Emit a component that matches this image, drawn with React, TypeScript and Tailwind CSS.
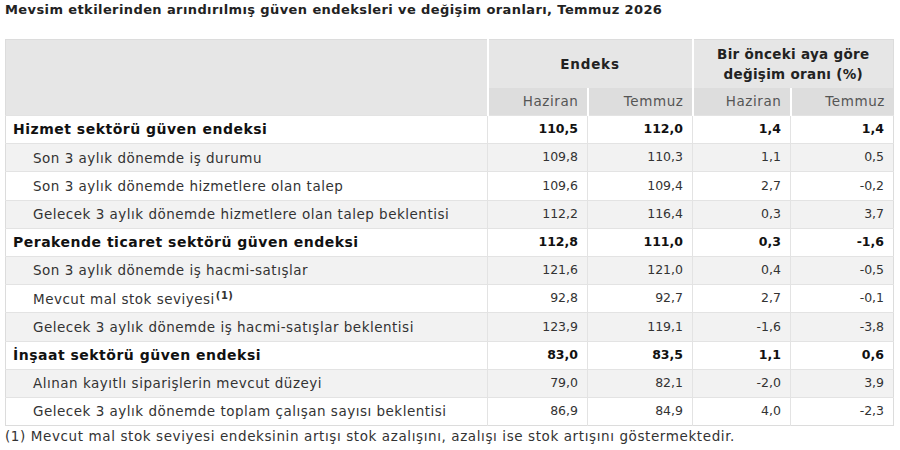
import React from 'react'

type Row = {
  label: string
  values: [string, string, string, string]
  bold?: boolean
  note?: boolean
}

const rows: Row[] = [
  { label: 'Hizmet sektörü güven endeksi', values: ['110,5', '112,0', '1,4', '1,4'], bold: true },
  { label: 'Son 3 aylık dönemde iş durumu', values: ['109,8', '110,3', '1,1', '0,5'] },
  { label: 'Son 3 aylık dönemde hizmetlere olan talep', values: ['109,6', '109,4', '2,7', '-0,2'] },
  { label: 'Gelecek 3 aylık dönemde hizmetlere olan talep beklentisi', values: ['112,2', '116,4', '0,3', '3,7'] },
  { label: 'Perakende ticaret sektörü güven endeksi', values: ['112,8', '111,0', '0,3', '-1,6'], bold: true },
  { label: 'Son 3 aylık dönemde iş hacmi-satışlar', values: ['121,6', '121,0', '0,4', '-0,5'] },
  { label: 'Mevcut mal stok seviyesi', values: ['92,8', '92,7', '2,7', '-0,1'], note: true },
  { label: 'Gelecek 3 aylık dönemde iş hacmi-satışlar beklentisi', values: ['123,9', '119,1', '-1,6', '-3,8'] },
  { label: 'İnşaat sektörü güven endeksi', values: ['83,0', '83,5', '1,1', '0,6'], bold: true },
  { label: 'Alınan kayıtlı siparişlerin mevcut düzeyi', values: ['79,0', '82,1', '-2,0', '3,9'] },
  { label: 'Gelecek 3 aylık dönemde toplam çalışan sayısı beklentisi', values: ['86,9', '84,9', '4,0', '-2,3'] },
]

export default function App() {
  return (
    <div className="h-[450px] w-[900px] overflow-hidden bg-white font-['DejaVu_Sans','Liberation_Sans',sans-serif] text-[#333]">
      <h1 className="px-[5px] pt-[1px] text-[13px] font-bold leading-[18px] tracking-[0.4px] text-[#222]">
        Mevsim etkilerinden arındırılmış güven endeksleri ve değişim oranları, Temmuz 2026
      </h1>

      <table className="ml-[5px] mt-[20px] w-[888px] table-fixed border-collapse border border-[#dcdcdc]">
        <colgroup>
          <col className="w-[482px]" />
          <col className="w-[100px]" />
          <col className="w-[105px]" />
          <col className="w-[98px]" />
          <col className="w-[103px]" />
        </colgroup>
        <thead>
          <tr className="h-[48px] bg-[#e6e6e6] text-[13.5px] leading-[20px] tracking-[0.3px]">
            <th rowSpan={2} className="border-r-2 border-white" />
            <th colSpan={2} className="border-r-2 border-white text-center font-bold tracking-[0.8px] text-[#222]">
              Endeks
            </th>
            <th colSpan={2} className="text-center font-bold text-[#222]">
              Bir önceki aya göre
              <br />
              değişim oranı (%)
            </th>
          </tr>
          <tr className="h-[28px] bg-[#dddddd] text-[13.5px] tracking-[0.6px] text-[#555]">
            <th className="border-r-2 border-white pr-[8px] text-right font-normal">Haziran</th>
            <th className="border-r-2 border-white pr-[8px] text-right font-normal">Temmuz</th>
            <th className="border-r-2 border-white pr-[8px] text-right font-normal">Haziran</th>
            <th className="pr-[8px] text-right font-normal">Temmuz</th>
          </tr>
        </thead>
        <tbody>
          {rows.map((r, i) => (
            <tr
              key={r.label}
              className={`h-[28.2px] border-t border-[#e3e3e3] ${i % 2 === 1 ? 'bg-[#f2f2f2]' : 'bg-white'} ${r.bold ? 'font-bold text-[#111]' : ''}`}
            >
              <td
                className={
                  r.bold
                    ? 'pl-[7px] text-[14px] tracking-[0.5px]'
                    : 'pl-[27px] text-[13.5px] tracking-[0.5px]'
                }
              >
                {r.label}
                {r.note && <sup className="ml-[1px] text-[10px] font-bold">(1)</sup>}
              </td>
              {r.values.map((v, j) => (
                <td key={j} className="border-l border-[#e3e3e3] pr-[9px] text-right text-[12.5px]">
                  {v}
                </td>
              ))}
            </tr>
          ))}
        </tbody>
      </table>

      <p className="px-[5px] pt-[1px] text-[13.5px] leading-[18px] tracking-[0.6px] text-[#333]">
        (1) Mevcut mal stok seviyesi endeksinin artışı stok azalışını, azalışı ise stok artışını göstermektedir.
      </p>
    </div>
  )
}
